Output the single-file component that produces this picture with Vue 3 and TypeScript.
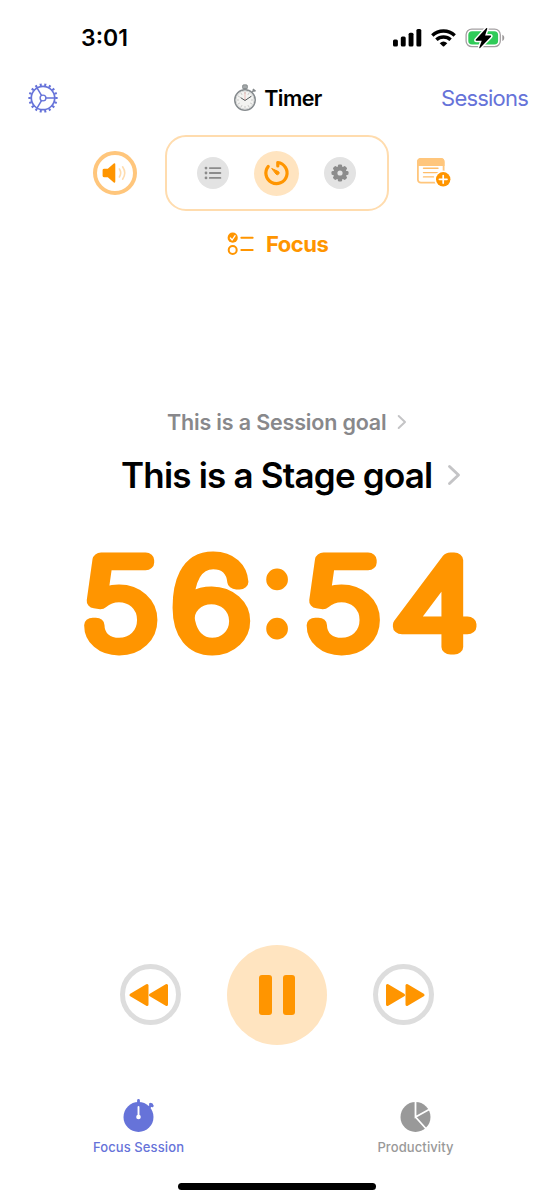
<script setup lang="ts">
interface Tab {
  id: string
  label: string
  active: boolean
}

interface Glyph {
  char: string
  center: number
  stretch: number
}

const clock = '3:01'
const digits: Glyph[] = [
  { char: '5', center: 50, stretch: 1.15 },
  { char: '6', center: 141.5, stretch: 1.19 },
  { char: '5', center: 272.5, stretch: 1.15 },
  { char: '4', center: 364.5, stretch: 1.22 },
]

const tabs: Tab[] = [
  { id: 'focus', label: 'Focus Session', active: true },
  { id: 'stats', label: 'Productivity', active: false },
]

const stopwatchTicks = Array.from({ length: 12 }, (_, i) => i * 30)
const cogTeeth = Array.from({ length: 8 }, (_, i) => i * 45)
</script>

<template>
  <main class="screen">
    <div class="status">
      <span class="clock">{{ clock }}</span>
      <svg class="status-icons" width="114" height="26" viewBox="0 0 114 26">
        <rect x="1" y="14.6" width="4.9" height="6.8" rx="1.5" />
        <rect x="8.8" y="11.6" width="4.9" height="9.8" rx="1.5" />
        <rect x="16.6" y="7.8" width="4.9" height="13.6" rx="1.5" />
        <rect x="24.4" y="4" width="4.9" height="17.4" rx="1.5" />
        <g fill="none" stroke="#000" stroke-width="3.4">
          <path d="M40.3 10.4a16.3 16.3 0 0 1 22.4 0" />
          <path d="M44.4 14.8a10.3 10.3 0 0 1 14.2 0" />
        </g>
        <path d="M47.7 18.2a5.7 5.7 0 0 1 7.6 0l-3.1 3.1q-.7.6-1.4 0z" />
        <rect x="74.1" y="4.1" width="34.2" height="17.6" rx="5.7" fill="none" stroke="#a4a0a2" stroke-width="1.3" />
        <rect x="76.3" y="6.3" width="29.8" height="13.2" rx="3.8" fill="#30cb59" />
        <path d="M110.3 9.8c2.6.8 2.6 5.3 0 6.1z" fill="#9b9899" />
        <path d="M94.2 3.2 83.8 14.6q-.7 1.1.6 1.1h5.3l-2.4 6.8q-.2 1.1.8.4l10.8-11.2q.9-1.2-.6-1.2h-5.2l2.2-6.8q.1-1.1-1.1-.5z" stroke="#fff" stroke-width="3" paint-order="stroke" />
      </svg>
    </div>

    <header class="nav">
      <svg class="gear" width="32" height="32" viewBox="0 0 32 32" fill="none" stroke="#6673d9">
        <circle cx="16" cy="16" r="13.4" stroke-width="2.5" pathLength="180" stroke-dasharray="4.4 5.6" stroke-dashoffset="2.2" />
        <circle cx="16" cy="16" r="11.7" stroke-width="1.7" />
        <circle cx="16" cy="16" r="2.9" stroke-width="1.4" />
        <path d="M19 16h8.8M14.5 13.4 10 5.8M14.5 18.6 10 26.2" stroke-width="1.5" />
      </svg>
      <div class="title">
        <svg width="25" height="28" viewBox="0 0 25 28">
          <rect x="9.6" y="0.8" width="4.8" height="4.2" rx="1.2" fill="#a4a8aa" stroke="#73787a" stroke-width=".7" />
          <path d="M12 4.5v2.5" stroke="#7e8385" stroke-width="2.5" />
          <path d="m19.2 7.8 2.2-1.9M19.9 5.1l2.6 2.3" stroke="#85898b" stroke-width="1.7" />
          <circle cx="12" cy="16" r="10.2" fill="#f3f3f1" stroke="#868b8e" stroke-width="1.6" />
          <circle cx="12" cy="16" r="9" fill="none" stroke="#d0d2d2" stroke-width=".8" />
          <g stroke="#b0b0b0" stroke-width=".8">
            <path v-for="a in stopwatchTicks" :key="a" d="M12 8.2v1.6" :transform="`rotate(${a} 12 16)`" />
          </g>
          <path d="M12 16V8" stroke="#e9a6a0" stroke-width=".7" />
          <path d="m7.6 13.6 4.4 2.9 6.2-4.2" fill="none" stroke="#55585a" stroke-width="1" />
        </svg>
        <span class="title-text">Timer</span>
      </div>
      <span class="sessions">Sessions</span>
    </header>

    <section class="toolbar">
      <div class="sound">
        <svg width="26" height="22" viewBox="0 0 26 22">
          <path d="M2.3 6.8h3.5l6-5.2q1.5-.9 1.5.8v17.2q0 1.7-1.5.8l-6-5.2h-3.5Q.6 15.2.6 13.9V8.1q0-1.3 1.7-1.3z" fill="#ff9500" />
          <g fill="none" stroke="#ffdcae" stroke-width="1.6" stroke-linecap="round">
            <path d="M17.4 7q2.6 4 0 8" />
            <path d="M20.6 4.8q4.3 6.2 0 12.4" />
          </g>
        </svg>
      </div>
      <div class="modes">
        <div class="mode">
          <svg width="18" height="14" viewBox="0 0 18 14" stroke="#8c8c8c" stroke-linecap="round" fill="#8c8c8c">
            <path d="M5.8 2.1h10.6M5.8 7h10.6M5.8 11.9h10.6" stroke-width="1.8" />
            <g stroke="none"><circle cx="2" cy="2.1" r="1.4" /><circle cx="2" cy="7" r="1.4" /><circle cx="2" cy="11.9" r="1.4" /></g>
          </svg>
        </div>
        <div class="mode selected">
          <svg width="28" height="28" viewBox="0 0 28 28" fill="none" stroke="#ff9500" stroke-linecap="round" stroke-linejoin="round">
            <path d="M5.2 7.4A10.6 10.6 0 1 0 14.8 3.5v3.4" stroke-width="3.2" />
            <path d="m9 9.6 6.500 3a1.700 1.700 0 0 1-2.300 2.700z" fill="#ff9500" stroke-width="1" />
          </svg>
        </div>
        <div class="mode">
          <svg width="18" height="18" viewBox="0 0 18 18" fill="#8c8c8c">
            <rect v-for="a in cogTeeth" :key="a" x="6.9" y=".5" width="4.2" height="5" rx="1.3" :transform="`rotate(${a} 9 9)`" />
            <circle cx="9" cy="9" r="4.7" fill="none" stroke="#8c8c8c" stroke-width="4.2" />
          </svg>
        </div>
      </div>
      <svg class="note" width="36" height="32" viewBox="0 0 36 32">
        <path d="M1 9V5q0-4 4-4h19.5q4 0 4 4v4z" fill="#ffc67c" />
        <rect x="1.9" y="1.9" width="25.7" height="23.8" rx="3" fill="none" stroke="#ffc67c" stroke-width="1.8" />
        <path d="M7.5 11.3H22M7.5 15.6H22M7.5 19.9h10" stroke="#ffbd69" stroke-width="1.4" stroke-linecap="round" />
        <circle cx="27.2" cy="22.3" r="8.9" fill="#fff" />
        <circle cx="27.2" cy="22.3" r="7.2" fill="#ff9500" />
        <path d="M23.4 22.3H31M27.2 18.5v7.6" stroke="#fff" stroke-width="1.7" stroke-linecap="round" />
      </svg>
    </section>

    <div class="stage">
      <svg width="28" height="24" viewBox="0 0 28 24" fill="none" stroke="#ff9500" stroke-linecap="round">
        <circle cx="5.7" cy="5.7" r="5.1" fill="#ff9500" stroke="none" />
        <path d="m3.4 6 1.7 2 3-4.3" stroke="#fff" stroke-width="1.3" />
        <circle cx="5.7" cy="18" r="4" stroke-width="2" />
        <path d="M14.3 5.7h11.4M14.3 18h11.4" stroke-width="1.9" />
      </svg>
      <span class="stage-text">Focus</span>
    </div>

    <section class="goals">
      <div class="goal session-goal">
        <span class="session-text">This is a Session goal</span>
        <svg width="10" height="16" viewBox="0 0 10 16" fill="none" stroke="#c4c4c6" stroke-width="2" stroke-linecap="round" stroke-linejoin="round"><path d="m1.7 2 6.3 6-6.3 6" /></svg>
      </div>
      <div class="goal stage-goal">
        <span class="stage-goal-text">This is a Stage goal</span>
        <svg width="14" height="22" viewBox="0 0 14 22" fill="none" stroke="#c4c4c6" stroke-width="2.9" stroke-linecap="round" stroke-linejoin="round"><path d="m2.5 2.5 9 8.5-9 8.5" /></svg>
      </div>
    </section>

    <svg class="countdown" width="414" height="180" viewBox="0 0 414 180">
      <text v-for="(d, i) in digits" :key="i" text-anchor="middle" :transform="`translate(${d.center} 127) scale(${d.stretch} 1)`">{{ d.char }}</text>
      <text class="colon" x="207" y="111.5" text-anchor="middle">:</text>
    </svg>

    <section class="controls">
      <div class="skip">
        <svg width="46" height="26" viewBox="0 0 46 26" fill="#ff9500" stroke="#ff9500" stroke-width="3" stroke-linejoin="round"><path d="M3 13 19 3.5v19zM22.5 13l16-9.5v19z" /></svg>
      </div>
      <div class="pause">
        <span class="bar"></span>
        <span class="bar"></span>
      </div>
      <div class="skip">
        <svg width="46" height="26" viewBox="0 0 46 26" fill="#ff9500" stroke="#ff9500" stroke-width="3" stroke-linejoin="round"><path d="M42 13 26 3.5v19zM22.5 13l-16-9.5v19z" /></svg>
      </div>
    </section>

    <nav class="tabs">
      <div v-for="tab in tabs" :key="tab.id" class="tab" :class="{ active: tab.active }">
        <svg v-if="tab.id === 'focus'" width="34" height="34" viewBox="0.5 0 34 34">
          <circle cx="17" cy="19" r="15" fill="#6673d9" />
          <path d="M17 2.5v3M27.5 9.5l2.6-2.9M28.9 6.2l1.9 1.6" stroke="#6673d9" stroke-width="2.8" stroke-linecap="round" />
          <path d="M17 9v10" stroke="#fff" stroke-width="1.9" stroke-linecap="round" />
          <circle cx="17" cy="19" r="2.3" fill="#fff" />
        </svg>
        <svg v-else width="34" height="34" viewBox="0.5 0 34 34">
          <circle cx="17" cy="19" r="15" fill="#999" />
          <path d="M17 3v16l14.5-8M17 19l10.8 12" fill="none" stroke="#fff" stroke-width="1.8" />
        </svg>
        <span class="tab-label">{{ tab.label }}</span>
      </div>
    </nav>

    <div class="home"></div>
  </main>
</template>

<style>
body {
  margin: 0;
  background: #fff;
}
</style>

<style scoped>
.screen {
  width: 554px;
  height: 1200px;
  display: flex;
  flex-direction: column;
  box-sizing: border-box;
  overflow: hidden;
  background: #fff;
  color: #000;
  font-family: Inter, "Liberation Sans", sans-serif;
  white-space: nowrap;
}

svg {
  display: block;
  flex: none;
}

.status {
  height: 75px;
  display: flex;
  align-items: center;
  justify-content: space-between;
  padding: 0 48px 0 81px;
  box-sizing: border-box;
}

.clock {
  font-size: 23px;
  font-weight: 600;
}

.nav {
  height: 45px;
  display: grid;
  grid-template-columns: 1fr auto 1fr;
  align-items: center;
  padding: 0 26px 0 27px;
}

.title {
  display: flex;
  align-items: center;
  gap: 6px;
}

.title-text {
  font-size: 21.5px;
  font-weight: 600;
  letter-spacing: -0.6px;
}

.sessions {
  justify-self: end;
  font-size: 22px;
  letter-spacing: -0.8px;
  color: #6673d9;
}

.toolbar {
  margin-top: 15px;
  height: 76px;
  padding-left: 92.5px;
  display: flex;
  align-items: center;
}

.sound {
  width: 44px;
  height: 44px;
  box-sizing: border-box;
  border: 4px solid #ffc67c;
  border-radius: 50%;
  display: flex;
  align-items: center;
  justify-content: center;
}

.modes {
  width: 224px;
  height: 76px;
  margin: 0 27.5px 0 28px;
  box-sizing: border-box;
  border: 2px solid #ffdcae;
  border-radius: 21px;
  display: flex;
  align-items: center;
  justify-content: center;
  gap: 25px;
}

.mode {
  width: 32px;
  height: 32px;
  border-radius: 50%;
  background: #e3e3e3;
  display: flex;
  align-items: center;
  justify-content: center;
}

.mode.selected {
  width: 45px;
  height: 45px;
  background: #ffe4c0;
}

.stage {
  margin-top: 20px;
  height: 26px;
  padding-left: 227px;
  display: flex;
  align-items: center;
  gap: 11px;
  color: #ff9500;
}

.stage-text {
  font-size: 22px;
  font-weight: 700;
  letter-spacing: -0.5px;
}

.goals {
  margin-top: 147px;
}

.goal {
  display: flex;
  align-items: center;
}

.session-goal {
  height: 36px;
  padding-left: 167px;
  gap: 11px;
}

.session-text {
  font-size: 21.5px;
  font-weight: 600;
  letter-spacing: -0.17px;
  color: #88888b;
}

.stage-goal {
  height: 68px;
  padding: 1px 0 0 121px;
  box-sizing: border-box;
  gap: 15px;
}

.stage-goal-text {
  font-size: 35px;
  font-weight: 600;
  letter-spacing: -0.8px;
}

.countdown {
  margin: 12px 0 0 70px;
  fill: #ff9500;
  stroke: #ff9500;
  stroke-width: 15px;
  stroke-linejoin: round;
  font-family: Inter, sans-serif;
  font-size: 119.5px;
  font-weight: 100;
}

.colon {
  font-size: 111px;
  font-weight: 200;
  stroke-width: 13px;
}

.controls {
  margin-top: 244.5px;
  height: 100px;
  display: flex;
  align-items: center;
  justify-content: center;
  gap: 46px;
}

.skip {
  width: 61px;
  height: 61px;
  box-sizing: border-box;
  border: 5px solid #ddd;
  border-radius: 50%;
  display: flex;
  align-items: center;
  justify-content: center;
}

.pause {
  width: 100px;
  height: 100px;
  border-radius: 50%;
  background: #ffe4c0;
  display: flex;
  align-items: center;
  justify-content: center;
  gap: 11px;
}

.bar {
  width: 12.5px;
  height: 40px;
  border-radius: 3px;
  background: #ff9500;
}

.tabs {
  margin-top: 53.5px;
  height: 60px;
  display: grid;
  grid-template-columns: 1fr 1fr;
}

.tab {
  display: flex;
  flex-direction: column;
  align-items: center;
  gap: 7px;
  color: #999;
}

.tab.active {
  color: #6673d9;
}

.tab-label {
  font-size: 13px;
  line-height: 16px;
  font-weight: 500;
  letter-spacing: 0.1px;
}

.home {
  width: 198px;
  height: 6.5px;
  margin: 25px auto 0;
  border-radius: 4px;
  background: #000;
}
</style>
